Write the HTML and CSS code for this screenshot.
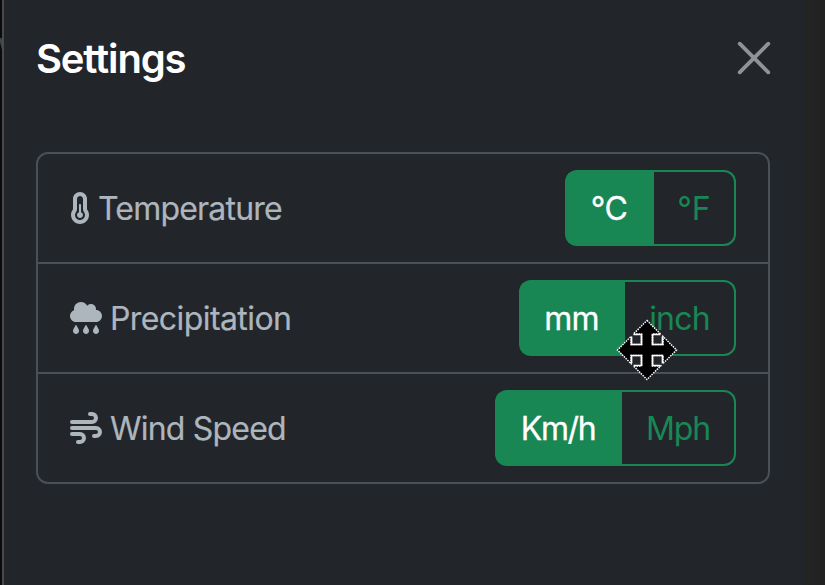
FILE: index.html
```html
<!DOCTYPE html>
<html lang="en">
<head>
<meta charset="utf-8">
<title>Settings</title>
<link rel="stylesheet" href="styles.css">
</head>
<body>
<div class="backdrop"><svg class="behind" width="4" height="22" viewBox="0 0 4 22" aria-hidden="true"><path d="M0 0h1.600L4 10v10L0 4z"/></svg></div>
<aside class="panel">
  <header class="head">
    <h1 class="title">Settings</h1>
    <button class="close" aria-label="Close"><svg width="36" height="36" viewBox="0 0 36 36"><path d="M3.700 3.700 32.300 32.300M32.300 3.700 3.700 32.300"/></svg></button>
  </header>
  <ul class="list">
    <li class="row">
      <div class="label">
        <svg width="20" height="32" viewBox="0 0 320 512"><path d="M160 64c-26.500 0-48 21.500-48 48V276.500c0 17.300-7.100 31.900-15.300 42.500C86.200 332.600 80 349.500 80 368c0 44.200 35.800 80 80 80s80-35.800 80-80c0-18.500-6.200-35.400-16.700-48.900c-8.200-10.600-15.300-25.200-15.300-42.500V112c0-26.500-21.500-48-48-48zM48 112C48 50.200 98.100 0 160 0s112 50.100 112 112V276.500c0 .1 .1 .3 .2 .6c.2 .6 .8 1.600 1.700 2.800c18.900 24.400 30.100 55 30.100 88.100c0 79.500-64.500 144-144 144S16 447.500 16 368c0-33.200 11.200-63.800 30.100-88.100c.9-1.200 1.500-2.200 1.700-2.800c.1-.3 .2-.5 .2-.6V112zM208 368c0 26.500-21.500 48-48 48s-48-21.500-48-48c0-20.900 13.400-38.700 32-45.300V208c0-8.800 7.200-16 16-16s16 7.200 16 16V322.700c18.600 6.600 32 24.400 32 45.300z"/></svg>
        <span class="temperature">Temperature</span>
      </div>
      <div class="group"><button class="btn on c">°C</button><button class="btn f">°F</button></div>
    </li>
    <li class="row">
      <div class="label">
        <svg width="32" height="32" viewBox="0 0 512 512"><path d="M96 320c-53 0-96-43-96-96c0-42.500 27.600-78.600 65.900-91.200C64.700 126.100 64 119.100 64 112C64 50.100 114.100 0 176 0c43.100 0 80.500 24.300 99.200 60c14.700-17.100 36.500-28 60.800-28c44.200 0 80 35.800 80 80c0 5.500-.6 10.800-1.600 16c.5 0 1.100 0 1.600 0c53 0 96 43 96 96s-43 96-96 96H96z"/><path id="drop" d="M89.200 372c1.300-2.500 3.900-4 6.800-4s5.400 1.500 6.800 4l35.100 64.600c4.100 7.500 6.200 15.800 6.200 24.300v3c0 26.500-21.500 48-48 48s-48-21.500-48-48v-3c0-8.500 2.100-16.900 6.200-24.300z"/><use href="#drop" x="160"/><use href="#drop" x="320"/></svg>
        <span class="precipitation">Precipitation</span>
      </div>
      <div class="group"><button class="btn on mm">mm</button><button class="btn inch">inch</button></div>
    </li>
    <li class="row">
      <div class="label">
        <svg class="wind-icon" width="32" height="32" viewBox="0 0 512 512"><path d="M320 32h32a64 64 0 0 1 0 128H32M384 384h32a64 64 0 0 0 0-128H32M128 480h32a64 64 0 0 0 0-128H32"/></svg>
        <span class="wind">Wind Speed</span>
      </div>
      <div class="group"><button class="btn on kmh">Km/h</button><button class="btn mph">Mph</button></div>
    </li>
  </ul>
</aside>
<svg class="cursor" width="64" height="64" viewBox="-32 -32 64 64" aria-hidden="true">
  <path class="shape" d="M0-29.500 13.500-16H5.500V-5.500H16V-13.500L29.500 0 16 13.500V5.500H5.500V16H13.500L0 29.500-13.500 16H-5.500V5.500H-16V13.500L-29.500 0-16-13.500V-5.500H-5.500V-16H-13.500z"/>
  <path class="inner" d="M13.500-15.500H5.500V-5.500H15.500V-13.500M15.500 13.500V5.500H5.500V15.500H13.500M-13.500 15.500H-5.500V5.500H-15.500V13.500M-15.500-13.500V-5.500H-5.500V-15.500H-13.500"/>
</svg>
</body>
</html>
```
FILE: styles.css
```css
* { box-sizing: border-box; }
body {
  margin: 0;
  width: 825px;
  height: 585px;
  overflow: hidden;
  position: relative;
  display: flex;
  background: linear-gradient(90deg, #242424 802px, #212121 825px);
  font: 32px/48px Inter, "Liberation Sans", sans-serif;
  color: #adb5bd;
}
.backdrop { width: 2px; background: #0b0b0c; padding-top: 38px; }
.behind { display: block; fill: #444548; }
.panel {
  width: 801px;
  position: relative;
  padding: 32px;
  padding-right: 33px;
  border-left: 2px solid #48494c;
  background: #22262b;
}
.head { display: flex; justify-content: space-between; align-items: center; height: 54px; }
.title { margin: 0; font-size: 40px; line-height: 54px; font-weight: 600; color: #fff; letter-spacing: -1.15px; }
.close { display: block; height: 36px; margin: -2px -2px 0 0; padding: 0; border: 0; background: none; }
.close svg { display: block; fill: none; stroke: #909396; stroke-width: 3.8; stroke-linecap: round; }
.list { list-style: none; margin: 66px 0 0; padding: 0; border: 2px solid #495057; border-radius: 12px; }
.row { display: flex; justify-content: space-between; align-items: center; height: 108px; padding: 0 32px; }
.row + .row { height: 110px; border-top: 2px solid #495057; }
.label { display: flex; align-items: center; gap: 8px; white-space: nowrap; -webkit-text-stroke: .2px #adb5bd; }
.label span { padding-top: 2px; }
.temperature { letter-spacing: -.8px; }
.precipitation { letter-spacing: -.58px; }
.wind { letter-spacing: -.8px; }
.label svg { fill: currentColor; flex: none; }
.label .wind-icon { fill: none; stroke: currentColor; stroke-width: 64; stroke-linecap: round; }
.group { display: flex; height: 76px; }
.btn {
  height: 76px;
  padding: 2px 0 0;
  font: inherit;
  color: #198754;
  background: transparent;
  border: 2px solid #198754;
  border-left: 0;
  border-radius: 0 12px 12px 0;
  white-space: nowrap;
}
.on { padding-right: 3px; color: #fff; background: #198754; border-left: 2px solid #198754; border-right: 0; border-radius: 12px 0 0 12px; -webkit-text-stroke: .3px #fff; }
.c { width: 89px; letter-spacing: -.5px; }
.f { width: 82px; }
.mm { width: 106px; letter-spacing: -.8px; }
.inch { width: 111px; letter-spacing: -.8px; }
.kmh { width: 127px; letter-spacing: -1.4px; }
.mph { width: 114px; letter-spacing: -1.1px; }
.cursor { position: absolute; left: 615px; top: 318px; }
.shape { fill: #000; stroke: #fff; stroke-width: 1.5; stroke-dasharray: 1.5 1; }
.inner { fill: none; stroke: #fff; stroke-width: 1.7; }
```
